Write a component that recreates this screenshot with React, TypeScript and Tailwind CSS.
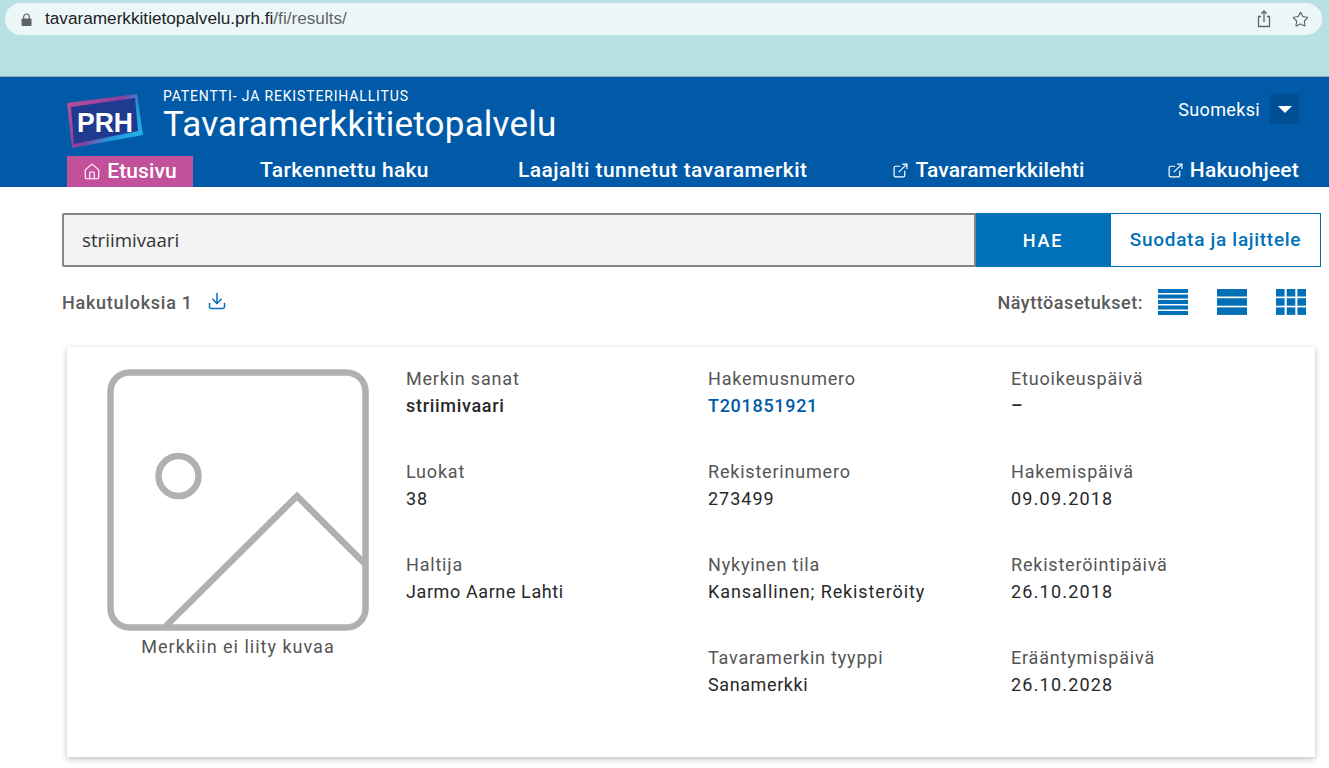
import React from "react";
import { Star, ExternalLink, Home, Download } from "lucide-react";

const font = "font-['Roboto',sans-serif]";

function Share() {
  return (
    <svg width="14" height="18" viewBox="0 0 14 18" fill="none" stroke="#5f6368" strokeWidth="1.3">
      <path d="M4 6.5H1.5v10h11v-10H10" />
      <path d="M7 12V1.2M4.2 3.8 7 1l2.8 2.8" />
    </svg>
  );
}

function LockIcon() {
  return (
    <svg width="11" height="13" viewBox="0 0 11 13" className="mr-[13px] shrink-0">
      <path d="M2.7 6V3.8a2.8 2.8 0 0 1 5.6 0V6" fill="none" stroke="#5f6368" strokeWidth="1.2" />
      <rect x="0.5" y="5.5" width="10" height="7.5" rx="1" fill="#5f6368" />
    </svg>
  );
}

function Logo() {
  return (
    <svg width="78" height="56" viewBox="0 0 78 56" className="shrink-0">
      <defs>
        <linearGradient id="edge" x1="0" y1="0" x2="1" y2="0.6">
          <stop offset="0" stopColor="#c2509b" />
          <stop offset="0.55" stopColor="#8a3f9a" />
          <stop offset="0.8" stopColor="#1f9bdc" />
          <stop offset="1" stopColor="#27a9e6" />
        </linearGradient>
      </defs>
      <polygon points="0,10 70,1 76,42 5,55" fill="url(#edge)" />
      <polygon points="4,14 68,5 71,38 7,51" fill="#1f3a8f" />
      <text x="10" y="39" fill="#ffffff" fontFamily="'Liberation Sans',sans-serif" fontWeight="700" fontSize="27" textLength="56" lengthAdjust="spacingAndGlyphs">PRH</text>
    </svg>
  );
}

function Field({ label, value, kind }: { label: string; value: string; kind?: "strong" | "link" | "date" | "num" | "long" }) {
  const valueClass =
    kind === "strong"
      ? "text-[#282828] font-medium tracking-[0.7px]"
      : kind === "link"
        ? "text-[#005aa8] font-medium tracking-[0.7px]"
        : kind === "date"
          ? "text-[#282828] tracking-[1.2px]"
          : kind === "num"
            ? "text-[#282828] tracking-[1px]"
            : kind === "long"
              ? "text-[#282828] tracking-[0.9px]"
              : "text-[#282828] tracking-[0.6px]";
  return (
    <div className="h-[93px]">
      <div className="text-[18px] leading-[27px] tracking-[0.8px] text-[#555555]">{label}</div>
      <div className={`text-[18px] leading-[27px] ${valueClass}`}>{value}</div>
    </div>
  );
}

function ListDense() {
  return (
    <svg width="30" height="26" viewBox="0 0 30 26" fill="#0071b8">
      <rect y="0" width="30" height="4" /><rect y="5.5" width="30" height="4" /><rect y="11" width="30" height="4" /><rect y="16.5" width="30" height="4" /><rect y="22" width="30" height="4" />
    </svg>
  );
}
function ListWide() {
  return (
    <svg width="30" height="26" viewBox="0 0 30 26" fill="#0071b8">
      <rect y="0" width="30" height="7.5" /><rect y="9.2" width="30" height="7.5" /><rect y="18.4" width="30" height="7.5" />
    </svg>
  );
}
function GridIcon() {
  return (
    <svg width="30" height="26" viewBox="0 0 30 26" fill="#0071b8">
      {[0, 10.7, 21.4].map((x) =>
        [0, 9.2, 18.4].map((y) => <rect key={`${x}-${y}`} x={x} y={y} width="8.6" height="7.5" />)
      )}
    </svg>
  );
}

function Placeholder() {
  return (
    <svg width="262" height="262" viewBox="0 0 262 262" fill="none" stroke="#b0b0b0" strokeWidth="6.5">
      <rect x="3.5" y="3.5" width="255" height="255" rx="19" />
      <circle cx="71.5" cy="107" r="20" />
      <path d="M59 257 190 127l68 68" />
    </svg>
  );
}

export default function App() {
  return (
    <div className={`h-[768px] overflow-hidden bg-white ${font}`}>
      <div className="h-[77px] bg-[#b8e1e4] pt-[3px] px-[5px] border-b border-[#8fa9ad]">
        <div className="h-[32px] w-[1317px] rounded-full bg-[#eef7f8] flex items-center pl-[16px] pr-[13px]">
          <LockIcon />
          <span className="font-['Liberation_Sans',sans-serif] text-[17.2px] text-[#202124]">
            tavaramerkkitietopalvelu.prh.fi<span className="text-[#5f6368]">/fi/results/</span>
          </span>
          <div className="ml-auto flex items-center gap-[21px]">
            <Share />
            <Star size={17} className="text-[#5f6368]" strokeWidth={1.6} />
          </div>
        </div>
      </div>

      <header className="h-[110px] bg-[#005aa8] text-white pl-[67px] pr-[30px] flex flex-col">
        <div className="h-[79px] flex pt-[16px]">
          <Logo />
          <div className="ml-[18px] -mt-[8px]">
            <div className="text-[14px] leading-[20px] tracking-[0.85px] mt-[1px]">PATENTTI- JA REKISTERIHALLITUS</div>
            <div className="text-[35px] leading-[38px] tracking-[0.2px]">Tavaramerkkitietopalvelu</div>
          </div>
          <div className="ml-auto flex items-center h-[30px] mt-[1px]">
            <span className="text-[18px] tracking-[0.35px] mr-[10px]">Suomeksi</span>
            <span className="w-[29px] h-[30px] rounded-[2px] bg-[#004f94] flex items-center justify-center">
              <span className="w-0 h-0 border-l-[7px] border-r-[7px] border-t-[7px] border-l-transparent border-r-transparent border-t-white" />
            </span>
          </div>
        </div>
        <nav className="h-[31px] flex items-stretch text-[21px] leading-[29px] font-medium tracking-[0.4px]">
          <div className="w-[126px] bg-[#c2509b] flex items-center justify-center gap-[6px] tracking-[0.1px]">
            <Home size={18} strokeWidth={1.6} />
            <span>Etusivu</span>
          </div>
          <span className="ml-[67px] tracking-[0.35px]">Tarkennettu haku</span>
          <span className="ml-[89px] tracking-[0.45px]">Laajalti tunnetut tavaramerkit</span>
          <span className="ml-[85px] flex items-center gap-[6px] self-start h-[29px] tracking-[0.1px]"><ExternalLink size={17} strokeWidth={1.7} />Tavaramerkkilehti</span>
          <span className="ml-auto flex items-center gap-[6px] self-start h-[29px] tracking-[0.2px]"><ExternalLink size={17} strokeWidth={1.7} />Hakuohjeet</span>
        </nav>
      </header>

      <main className="pl-[62px] pr-[8px]">
        <div className="mt-[26px] flex h-[54px]">
          <div className="flex-1 bg-[#f4f4f4] border-2 border-[#858585] rounded-l-[2px] flex items-center pl-[18px] text-[18.7px] text-[#333333] font-['Open_Sans',sans-serif]">
            striimivaari
          </div>
          <div className="w-[134px] bg-[#0071b8] text-white flex items-center justify-center text-[18px] font-medium tracking-[1.8px]">HAE</div>
          <div className="w-[211px] border border-[#0071b8] text-[#0071b8] flex items-center justify-center text-[19px] font-medium tracking-[0.7px]">Suodata ja lajittele</div>
        </div>

        <div className="mt-[22px] h-[26px] flex items-center pr-[15px]">
          <span className="text-[18px] text-[#5a5a5a] tracking-[0.75px] font-medium">Hakutuloksia 1</span>
          <Download size={20} strokeWidth={1.8} className="ml-[14px] -mt-[2px] text-[#0071b8]" />
          <span className="ml-auto text-[18px] text-[#5a5a5a] tracking-[0.55px] font-medium mr-[15px]">Näyttöasetukset:</span>
          <div className="flex gap-[29px]">
            <ListDense />
            <ListWide />
            <GridIcon />
          </div>
        </div>

        <section className="mt-[32px] ml-[5px] mr-[6px] h-[410px] bg-white shadow-[0_2px_6px_rgba(0,0,0,0.25)] flex pl-[40px] pt-[18px]">
          <div className="w-[262px] shrink-0 flex flex-col items-center pt-[4px]">
            <Placeholder />
            <div className="mt-[2px] text-[18px] leading-[27px] tracking-[1px] text-[#555555]">Merkkiin ei liity kuvaa</div>
          </div>
          <div className="ml-[37px] w-[302px]">
            <Field label="Merkin sanat" value="striimivaari" kind="strong" />
            <Field label="Luokat" value="38" kind="num" />
            <Field label="Haltija" value="Jarmo Aarne Lahti" />
          </div>
          <div className="w-[303px]">
            <Field label="Hakemusnumero" value="T201851921" kind="link" />
            <Field label="Rekisterinumero" value="273499" kind="num" />
            <Field label="Nykyinen tila" value="Kansallinen; Rekisteröity" kind="long" />
            <Field label="Tavaramerkin tyyppi" value="Sanamerkki" />
          </div>
          <div>
            <Field label="Etuoikeuspäivä" value="–" kind="strong" />
            <Field label="Hakemispäivä" value="09.09.2018" kind="date" />
            <Field label="Rekisteröintipäivä" value="26.10.2018" kind="date" />
            <Field label="Erääntymispäivä" value="26.10.2028" kind="date" />
          </div>
        </section>
      </main>
    </div>
  );
}
